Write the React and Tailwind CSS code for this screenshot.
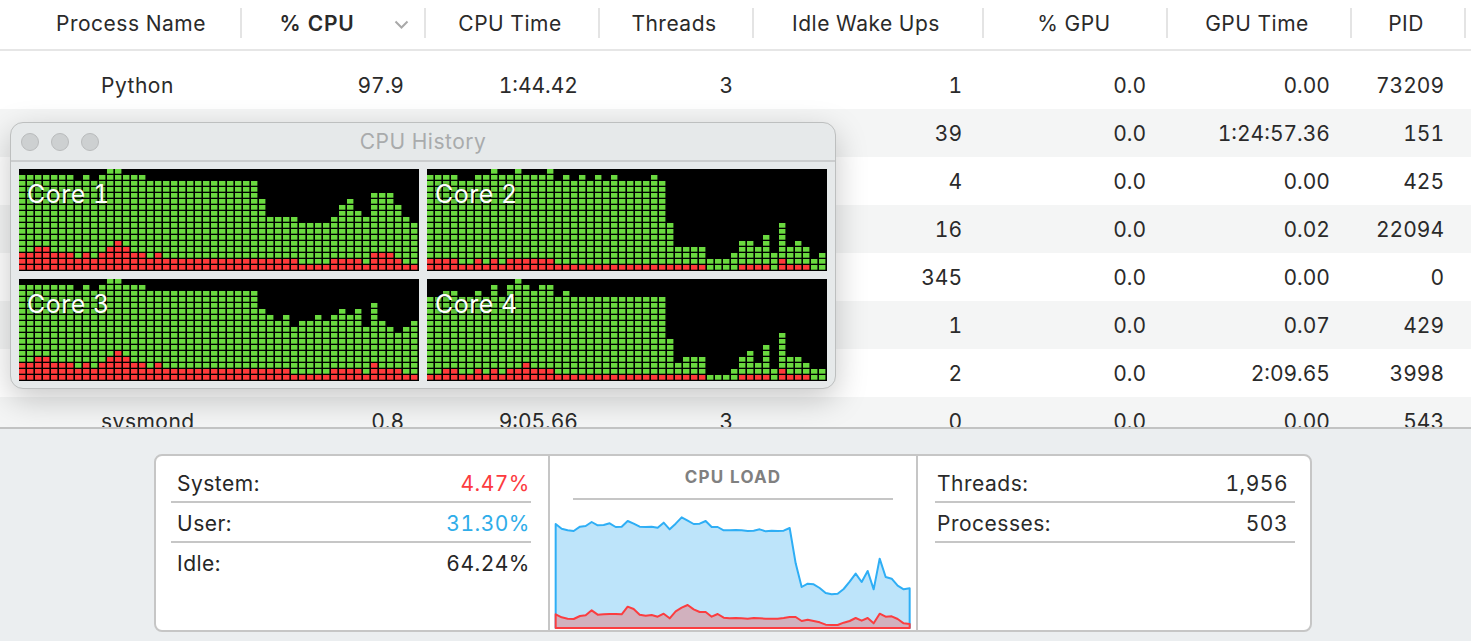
const rep = (v, n) => Array(n).fill(v);
const core1H = [...rep(16, 7), 15, 16, 15, 16, 17, 17, 16, 16, 16, ...rep(15, 14), 12, 9, 9, 9, 9, 8, 8, 8, 8, 9, 11, 12, 10, 9, 13, 13, 13, 11, 9, 8];
const core1R = [3, 3, 4, 4, 3, 3, 3, 2, 3, 2, 3, 4, 5, 4, 3, 3, 2, 3, ...rep(2, 17), 1, 1, 1, 1, 2, 2, 2, 2, 1, 3, 3, 3, 2, 1, 1];
const core2H = [...rep(16, 4), 15, 15, 16, 16, 17, 16, 16, 17, 16, 16, 16, 17, 15, 16, 15, 16, 15, 16, 15, 16, 15, 15, 15, 15, 16, 15, 8, 4, 4, 4, 4, 2, 2, 2, 3, 5, 5, 4, 6, 3, 8, 4, 5, 4, 2, 3];
const core2R = [2, 2, 2, 2, 1, 1, 2, 1, 2, 1, 2, 2, 2, 2, 2, 2, ...rep(1, 19), 0, 0, 0, 0, 1, 1, 1, 1, 0, 2, 1, 1, 1, 0, 0];
const core3H = [...core1H.slice(0, 30), 12, 11, 10, 11, 9, 10, 10, 11, 10, 11, 12, 11, 12, 9, 13, 10, 9, 8, 9, 10];
const core3R = [3, 3, 4, 4, 3, 3, 3, 2, 3, 2, 3, 4, 5, 4, 3, 3, 2, 3, ...rep(2, 16), 1, 1, 1, 1, 1, 2, 2, 2, 2, 1, 3, 2, 2, 2, 1, 1];
const core4H = [14, 14, 15, 15, 14, 14, 15, 14, 16, 14, 16, 17, 16, 15, 16, 16, 14, 15, ...rep(14, 12), 7, 3, 4, 4, 4, 1, 1, 1, 2, 4, 5, 3, 6, 2, 8, 4, 4, 3, 2, 2];
const core4R = [1, 1, 2, 2, 1, 1, 2, 1, 2, 1, 2, 2, 3, 2, 2, 2, ...rep(1, 19), 0, 0, 0, 0, 1, 1, 1, 1, 0, 2, 1, 1, 1, 0, 0];

const blue = "47,222 65,236 83,241 101,243 120,230 137,228 155,216 173,226 191,225 209,220 227,231 245,230 263,213 281,221 299,230 317,231 335,230 353,233 371,218 389,238 407,221 425,202 443,212 461,222 479,221 497,213 515,231 533,231 551,241 569,241 587,240 605,241 623,243 641,242 659,238 677,244 695,242 713,243 731,242 749,234 767,340 785,411 803,401 821,403 839,414 857,429 875,433 893,431 911,417 929,395 947,371 965,396 983,363 1001,418 1019,326 1037,381 1055,386 1073,407 1091,418 1109,415";
const red = "47,493 65,502 83,506 101,507 120,498 137,496 155,481 173,494 191,493 209,492 227,492 245,493 263,470 281,477 299,494 317,497 335,495 353,500 371,491 389,505 407,484 425,473 443,465 461,478 479,486 497,486 515,500 533,492 551,503 569,505 587,504 605,505 623,506 641,504 659,505 677,506 695,506 713,506 731,504 749,501 767,501 785,513 803,509 821,513 839,517 857,524 875,525 893,525 911,518 929,513 947,504 965,512 983,504 1001,520 1019,491 1037,500 1055,499 1073,507 1091,520 1109,522";

const rows = [
  ["Python", "97.9", "1:44.42", "3", "1", "0.0", "0.00", "73209"],
  ["", "", "", "", "39", "0.0", "1:24:57.36", "151"],
  ["", "", "", "", "4", "0.0", "0.00", "425"],
  ["", "", "", "", "16", "0.0", "0.02", "22094"],
  ["", "", "", "", "345", "0.0", "0.00", "0"],
  ["", "", "", "", "1", "0.0", "0.07", "429"],
  ["", "", "", "", "2", "0.0", "2:09.65", "3998"],
  ["svsmond", "0.8", "9:05.66", "3", "0", "0.0", "0.00", "543"],
];

function Core({ name, h, r }) {
  return (
    <div className="relative h-[102px] w-[400px] bg-black">
      <svg width="400" height="102" viewBox="0 0 400 102" className="block">
        {h.map((height, c) =>
          Array.from({ length: height }, (_, k) => (
            <rect key={k} x={c * 8} y={96 - k * 6} width="6.4" height="4.7" fill={k < r[c] ? "#ff3a3a" : "#6ad93f"} />
          ))
        )}
      </svg>
      <span className="absolute left-[8px] top-[9px] text-[25px] leading-[32px] text-white [text-shadow:0_0_5px_rgba(0,0,0,0.6)]">{name}</span>
    </div>
  );
}

function Stat({ label, value, color = "text-[#262626]", line = true }) {
  return (
    <div className={`flex h-10 items-center justify-between pl-1.5 pr-[1px] ${line ? "border-b-2 border-[#c6c6c6] pt-1" : "pt-0.5"}`}>
      <span className="text-[#262626]">{label}</span>
      <span className={`tracking-[0.5px] ${color}`}>{value}</span>
    </div>
  );
}

export default function App() {
  return (
    <div className="flex h-[641px] w-[1471px] flex-col overflow-hidden bg-white font-['Inter','Liberation_Sans',sans-serif] text-[21px] tabular-nums tracking-[0.5px] text-[#2a2a2a]">
      <div className="relative h-[427px] overflow-hidden">
        <div className="flex h-[51px] items-start border-b-2 border-[#e6e6e6] pt-2">
          <div className="h-[30px] w-[242px] border-r-2 border-[#e4e4e4] pl-[22px] text-center leading-[31px]">Process Name</div>
          <div className="relative h-[30px] w-[184px] border-r-2 border-[#e4e4e4] pr-[32px] text-center font-semibold leading-[31px] tracking-[0.8px]">
            % CPU
            <svg className="absolute left-[152px] top-[12px]" width="15" height="9" viewBox="0 0 15 9" fill="none" stroke="#a9a9a9" strokeWidth="2">
              <path d="M1.5 1.5 7.5 7.5 13.5 1.5" />
            </svg>
          </div>
          <div className="h-[30px] w-[174px] border-r-2 border-[#e4e4e4] pr-1 text-center leading-[31px]">CPU Time</div>
          <div className="h-[30px] w-[154px] border-r-2 border-[#e4e4e4] pr-1 text-center leading-[31px]">Threads</div>
          <div className="h-[30px] w-[230px] border-r-2 border-[#e4e4e4] pr-1 text-center leading-[31px]">Idle Wake Ups</div>
          <div className="h-[30px] w-[184px] border-r-2 border-[#e4e4e4] pr-0.5 text-center leading-[31px]">% GPU</div>
          <div className="h-[30px] w-[184px] border-r-2 border-[#e4e4e4] pr-1 text-center leading-[31px]">GPU Time</div>
          <div className="h-[30px] w-[114px] border-r-2 border-[#e4e4e4] pr-1 text-center leading-[31px]">PID</div>
        </div>
        <div className="pt-2.5">
          {rows.map((row, i) => (
            <div key={i} className={`flex h-12 items-center pt-0.5 tracking-normal ${i % 2 ? "bg-[#f4f5f5]" : "bg-white"}`}>
              <div className="w-[242px] pl-[101px] tracking-[0.5px]">{row[0]}</div>
              <div className="w-[184px] pr-[22px] text-right">{row[1]}</div>
              <div className="w-[174px] pr-[22px] text-right">{row[2]}</div>
              <div className="w-[154px] pr-[21px] text-right">{row[3]}</div>
              <div className="w-[230px] pr-[22px] text-right">{row[4]}</div>
              <div className="w-[184px] pr-[22px] text-right">{row[5]}</div>
              <div className="w-[184px] pr-[22px] text-right">{row[6]}</div>
              <div className="w-[119px] pr-[27px] text-right">{row[7]}</div>
            </div>
          ))}
        </div>
        <div className="absolute left-[10px] top-[122px] h-[267px] w-[826px] rounded-[13px] border border-[#bdbfbf] bg-[#e6e9ea] shadow-[0_10px_32px_rgba(0,0,0,0.22)]">
          <div className="relative flex h-[39px] items-center justify-center border-b-2 border-[#cbcdce]">
            <div className="absolute left-[10px] top-[10px] flex gap-3">
              <span className="size-[18px] rounded-full border border-[#b9bbbc] bg-[#cdd0d1]" />
              <span className="size-[18px] rounded-full border border-[#b9bbbc] bg-[#cdd0d1]" />
              <span className="size-[18px] rounded-full border border-[#b9bbbc] bg-[#cdd0d1]" />
            </div>
            <span className="text-[#a9abac]">CPU History</span>
          </div>
          <div className="grid grid-cols-[400px_400px] gap-2 pl-2 pt-[7px]">
            <Core name="Core 1" h={core1H} r={core1R} />
            <Core name="Core 2" h={core2H} r={core2R} />
            <Core name="Core 3" h={core3H} r={core3R} />
            <Core name="Core 4" h={core4H} r={core4R} />
          </div>
        </div>
      </div>
      <div className="flex-1 border-t-2 border-[#c2c3c3] bg-[#ebeef0] pl-[154px] pt-[25px]">
        <div className="flex h-[178px] w-[1158px] rounded-lg border-2 border-[#c6c6c6] bg-white">
          <div className="w-[392px] pl-[15px] pr-[17px] pt-[7px]">
            <Stat label="System:" value="4.47%" color="text-[#fc3b3f]" />
            <Stat label="User:" value="31.30%" color="text-[#2fade9]" />
            <Stat label="Idle:" value="64.24%" line={false} />
          </div>
          <div className="flex w-[370px] flex-col border-x-2 border-[#c6c6c6]">
            <div className="mx-[23px] flex h-[44px] items-center justify-center border-b-2 border-[#c6c6c6] pt-0.5 text-[17px] font-bold tracking-[1.2px] text-[#808080]">CPU LOAD</div>
            <svg className="ml-[3px] mt-[10px] block" width="360" height="120" viewBox="39 180 1080 360" fill="none">
              <polygon points={`47,534 ${blue} 1109,534`} fill="#bde4fa" stroke="#2eaef5" strokeWidth="6" strokeLinejoin="round" />
              <polygon points={`47,534 ${red} 1109,534`} fill="#d1b1be" stroke="#fb3d40" strokeWidth="6" strokeLinejoin="round" />
            </svg>
          </div>
          <div className="w-[392px] pl-[17px] pr-[15px] pt-[7px]">
            <div className="flex h-10 items-center justify-between border-b-2 border-[#c6c6c6] pl-0.5 pr-[7px] pt-1">
              <span>Threads:</span>
              <span>1,956</span>
            </div>
            <div className="flex h-10 items-center justify-between border-b-2 border-[#c6c6c6] pl-0.5 pr-[7px] pt-1">
              <span>Processes:</span>
              <span>503</span>
            </div>
          </div>
        </div>
      </div>
    </div>
  );
}
